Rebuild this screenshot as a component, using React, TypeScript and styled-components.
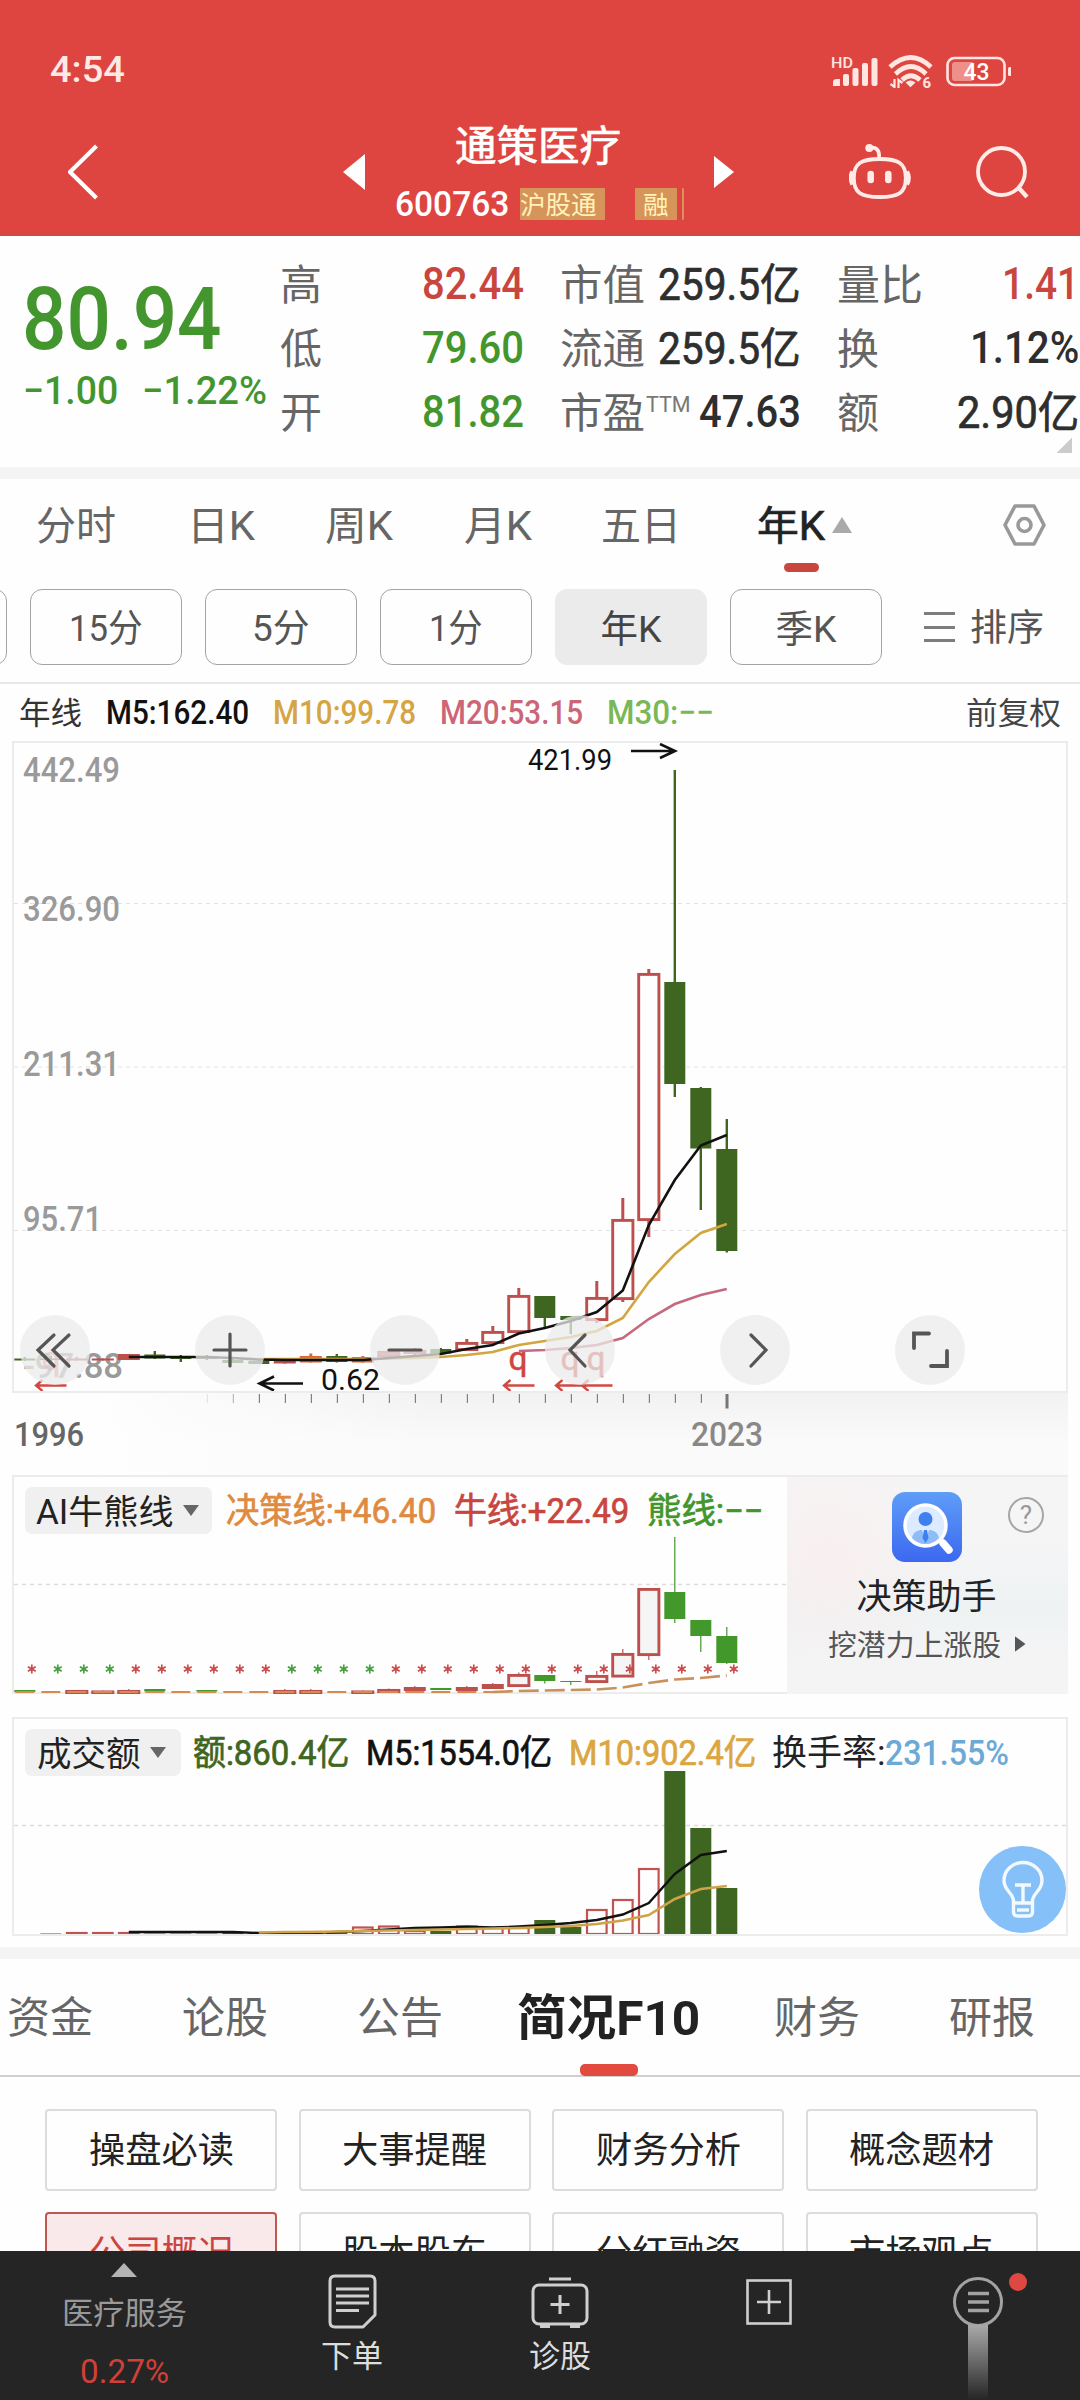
import React, { useLayoutEffect, useRef, useState } from "react";
import styled, { createGlobalStyle } from "styled-components";

const FONT = '"Roboto", "Noto Sans CJK SC", sans-serif';

const Global = createGlobalStyle`
  * { box-sizing: border-box; }
  html, body { margin: 0; padding: 0; background: #fefefe; }
  body { font-family: ${FONT}; }
  svg { display: block; flex: none; }
  svg text { font-family: ${FONT}; }
`;

/* ---------- text that is condensed to a given width ---------- */

const FitBox = styled.span<{ $w: number; $ml: number; $size: number; $color: string; $weight: number; $cjk: boolean; $mixed: boolean }>`
  display: block;
  flex: none;
  width: ${(p) => p.$w}px;
  margin-left: ${(p) => p.$ml}px;
  font-size: ${(p) => p.$size}px;
  line-height: 1.2;
  font-weight: ${(p) => (p.$weight === 500 && (p.$cjk || p.$mixed) ? 400 : p.$weight)};
  -webkit-text-stroke: ${(p) => (p.$weight === 500 && (p.$cjk || p.$mixed) ? "0.7px" : "0")};
  color: ${(p) => p.$color};
  white-space: nowrap;
  transform: translateY(${(p) => (p.$cjk ? 0.055 : p.$mixed ? 0.035 : 0.02)}em);
`;
const FitInner = styled.span`
  display: inline-block;
  transform-origin: 0 50%;
`;

type FitProps = { w: number; size: number; color?: string; ml?: number; weight?: number; children: string };

function Fit({ w, size, color = "#333", ml = 0, weight = 400, children }: FitProps) {
  const ref = useRef<HTMLSpanElement>(null);
  const [k, setK] = useState(1);
  useLayoutEffect(() => {
    if (ref.current && ref.current.offsetWidth) setK(w / ref.current.offsetWidth);
  }, [w, size, children]);
  const hasCjk = /[\u4e00-\u9fff]/.test(children);
  const hasDigits = /[0-9:]/.test(children);
  return (
    <FitBox $w={w} $ml={ml} $size={size} $color={color} $weight={weight} $cjk={hasCjk && !hasDigits} $mixed={hasCjk && hasDigits}>
      <FitInner ref={ref} style={{ transform: `scaleX(${k})` }}>{children}</FitInner>
    </FitBox>
  );
}

/* ---------- shell ---------- */

const Page = styled.div`
  width: 1080px;
  height: 2400px;
  overflow: hidden;
  display: flex;
  flex-direction: column;
  background: #fefefe;
`;
const Band = styled.div<{ $h: number }>`
  flex: none;
  height: ${(p) => p.$h}px;
  background: #f4f4f4;
`;

/* ---------- header ---------- */

const Header = styled.header`
  flex: none;
  height: 236px;
  background: #de4540;
  border-bottom: 2px solid #d14a44;
`;
const StatusBar = styled.div`
  height: 110px;
  padding: 30px 69px 0 50px;
  display: flex;
  align-items: center;
  justify-content: space-between;
`;
const TitleBar = styled.div`
  height: 124px;
  display: flex;
  align-items: center;
  padding-left: 68px;
`;
const Slot = styled.div<{ $ml: number }>`
  flex: none;
  margin-left: ${(p) => p.$ml}px;
`;
const TitleStack = styled.div`
  flex: none;
  width: 288px;
  height: 124px;
  margin-left: 31px;
  padding-top: 11px;
`;
const TitleLine = styled.div`
  height: 48px;
  display: flex;
  align-items: center;
`;
const CodeLine = styled.div`
  height: 34px;
  margin-top: 18px;
  display: flex;
  align-items: center;
`;
const Badge = styled.div<{ $w: number; $ml: number; $pad: number }>`
  flex: none;
  width: ${(p) => p.$w}px;
  margin-left: ${(p) => p.$ml}px;
  height: 32px;
  padding-left: ${(p) => p.$pad}px;
  display: flex;
  align-items: center;
  background: #d6935a;
  border-radius: 1px;
`;

function StatusIcons() {
  return (
    <svg width="182" height="36" viewBox="829 50 182 36" fill="none">
      <text x="831" y="66" fontSize="14.5" fontWeight="500" fill="#ffe6e1" textLength="22" lengthAdjust="spacingAndGlyphs">HD</text>
      <g fill="#ffe6e1">
        <path d="M833 84v-4q0-3 4-3h3v7z" />
        <rect x="843" y="72" width="6" height="12" rx="2" />
        <rect x="852.500" y="66" width="6" height="18" rx="2" />
        <rect x="862" y="61" width="6" height="23" rx="2" />
        <rect x="871.500" y="56" width="6" height="28" rx="2" />
      </g>
      <g stroke="#ffe6e1" strokeWidth="4.600" strokeLinecap="butt">
        <path d="M890 65Q911 46 931 65" />
        <path d="M895.500 72Q911 57 926 72" />
        <path d="M902 78Q911 69.500 920 78" />
      </g>
      <path d="M905.500 80.500q5-4 10 0l-5 4.800z" fill="#ffe6e1" />
      <path d="M894.500 77v8l-4-3M898.500 86v-8l4 3" stroke="#ffe6e1" strokeWidth="2.200" />
      <text x="922.500" y="85.500" fontSize="15" fontWeight="700" fill="#ffe6e1">6</text>
      <rect x="947.500" y="56" width="57" height="27" rx="7" stroke="#ffe6e1" strokeWidth="2.600" />
      <rect x="952" y="60" width="22" height="19" rx="3" fill="#ef8f8a" />
      <rect x="1008" y="65" width="3.500" height="9" rx="1.500" fill="#ffe6e1" />
      <text x="963.500" y="78" fontSize="23" fontWeight="500" fill="#fff" textLength="26" lengthAdjust="spacingAndGlyphs">43</text>
    </svg>
  );
}

/* ---------- quote ---------- */

const Quote = styled.section`
  flex: none;
  position: relative;
  height: 231px;
  display: flex;
`;
const PriceCol = styled.div`
  flex: none;
  width: 280px;
  padding: 28px 0 0 22px;
`;
const PriceLine = styled.div`
  height: 106px;
  display: flex;
  align-items: center;
`;
const ChangeLine = styled.div`
  height: 40px;
  display: flex;
  align-items: center;
`;
const QuoteGrid = styled.div`
  display: grid;
  grid-template-columns: 244px 241px 242px;
  grid-auto-rows: 64px;
  column-gap: 36px;
  padding-top: 16px;
`;
const QuoteCell = styled.div`
  display: flex;
  align-items: center;
  justify-content: space-between;
`;
const LabelWrap = styled.div`
  display: flex;
  align-items: center;
`;
const Super = styled.div`
  padding-bottom: 14px;
`;
const Corner = styled.div`
  position: absolute;
  right: 8px;
  bottom: 14px;
  width: 15px;
  height: 16px;
  background: linear-gradient(135deg, transparent 50%, #ccc 50%);
`;

const RED = "#c9463f";
const GREEN = "#43962d";
const QUOTES = [
  { l: "高", lw: 42, v: "82.44", vw: 102, c: RED },
  { l: "市值", lw: 85, v: "259.5亿", vw: 143, c: "#2e2e2e" },
  { l: "量比", lw: 86, v: "1.41", vw: 77, c: RED },
  { l: "低", lw: 42, v: "79.60", vw: 102, c: GREEN },
  { l: "流通", lw: 85, v: "259.5亿", vw: 143, c: "#2e2e2e" },
  { l: "换", lw: 42, v: "1.12%", vw: 109, c: "#2e2e2e" },
  { l: "开", lw: 42, v: "81.82", vw: 102, c: GREEN },
  { l: "市盈", lw: 85, v: "47.63", vw: 102, c: "#2e2e2e", sup: "TTM" },
  { l: "额", lw: 42, v: "2.90亿", vw: 122, c: "#2e2e2e" },
];

/* ---------- period tabs ---------- */

const PeriodTabs = styled.nav`
  flex: none;
  position: relative;
  height: 92px;
  display: flex;
  align-items: center;
`;
const ActiveBar = styled.div<{ $x: number; $y: number; $w: number; $h: number; $c: string }>`
  position: absolute;
  left: ${(p) => p.$x}px;
  top: ${(p) => p.$y}px;
  width: ${(p) => p.$w}px;
  height: ${(p) => p.$h}px;
  border-radius: 5px;
  background: ${(p) => p.$c};
`;
const Tri = styled.div<{ $ml: number; $w: number; $h: number; $c: string; $dir: "up" | "down" | "right" }>`
  flex: none;
  margin-left: ${(p) => p.$ml}px;
  width: ${(p) => p.$w}px;
  height: ${(p) => p.$h}px;
  background: ${(p) => p.$c};
  clip-path: ${(p) =>
    p.$dir === "up"
      ? "polygon(50% 0, 100% 100%, 0 100%)"
      : p.$dir === "down"
      ? "polygon(0 0, 100% 0, 50% 100%)"
      : "polygon(0 0, 100% 50%, 0 100%)"};
`;
const PillRow = styled.div`
  flex: none;
  height: 113px;
  padding-top: 18px;
  display: flex;
  border-bottom: 2px solid #e8e8e8;
`;
const Pill = styled.div<{ $on?: boolean }>`
  flex: none;
  width: 152px;
  height: 76px;
  margin-right: 23px;
  border: 1.5px solid ${(p) => (p.$on ? "#ebebeb" : "#a3a3a3")};
  background: ${(p) => (p.$on ? "#ebebeb" : "transparent")};
  border-radius: 12px;
  display: flex;
  align-items: center;
  justify-content: center;
`;
const PillEdge = styled(Pill)`
  margin-left: -145px;
`;
const SortBox = styled.div`
  height: 76px;
  margin-left: 19px;
  display: flex;
  align-items: center;
`;
const Burger = styled.div`
  width: 31px;
  height: 30px;
  display: flex;
  flex-direction: column;
  justify-content: space-between;
`;
const BurgerLine = styled.div`
  height: 3px;
  background: #7d7d7d;
`;
const Legend = styled.div`
  flex: none;
  height: 57px;
  display: flex;
  align-items: center;
  padding-bottom: 2px;
`;

/* ---------- charts ---------- */

const MainPanel = styled.section`
  flex: none;
  position: relative;
  width: 1056px;
  height: 652px;
  margin-left: 12px;
  border: 2px solid #ececec;
`;
const Controls = styled.div`
  position: absolute;
  left: 6px;
  top: 572px;
  display: flex;
  gap: 105px;
`;
const RoundBtn = styled.div`
  width: 70px;
  height: 70px;
  border-radius: 50%;
  background: rgba(235, 235, 235, 0.75);
  display: flex;
  align-items: center;
  justify-content: center;
`;
const AxisBand = styled.div`
  flex: none;
  position: relative;
  width: 1056px;
  height: 82px;
  margin-left: 12px;
  background: linear-gradient(90deg, #fefefe 8%, rgba(254, 254, 254, 0) 40%), linear-gradient(180deg, #f2f2f2, #fafafa 60%);
`;
const YearRow = styled.div`
  display: flex;
  padding: 1px 0 0 2px;
`;

const cx = (i: number) => 24.8 + 26 * i;
type Candle = [number, "r" | "g" | "R" | "o", number, number, number, number];

/* index, kind (r hollow, R filled, o orange, g green), body top/bottom, wick top/bottom */
const MAIN: Candle[] = [
  [0, "g", 1358.5, 1360.5, 1357, 1361],
  [1, "g", 1358.5, 1360, 1356, 1361],
  [2, "R", 1358.5, 1360.5, 1357, 1361],
  [3, "R", 1358.5, 1360.5, 1358, 1361],
  [4, "R", 1354, 1360, 1354, 1360],
  [5, "g", 1354.5, 1358.5, 1351, 1359],
  [6, "g", 1356, 1359, 1355, 1362],
  [7, "g", 1357, 1359, 1355, 1360],
  [8, "g", 1360, 1363, 1358, 1363],
  [9, "g", 1361, 1364, 1359, 1364],
  [10, "R", 1361, 1363.5, 1359, 1364],
  [11, "o", 1356, 1362.5, 1353.5, 1363],
  [12, "g", 1356, 1362, 1354, 1362.5],
  [13, "o", 1357, 1362.5, 1356, 1363],
  [14, "r", 1351, 1357, 1350, 1357],
  [15, "r", 1350, 1354, 1348, 1355],
  [16, "g", 1349, 1353.5, 1348, 1354],
  [17, "r", 1342, 1351, 1339, 1351],
  [18, "r", 1331, 1344, 1326, 1344],
  [19, "r", 1295, 1333, 1288, 1333],
  [20, "g", 1296, 1318, 1296, 1328],
  [21, "g", 1316, 1320, 1316, 1334],
  [22, "r", 1297, 1321, 1281, 1323],
  [23, "r", 1219, 1300, 1198, 1302],
  [24, "r", 973, 1221, 969, 1237],
  [25, "g", 982, 1084, 770, 1097],
  [26, "g", 1088, 1148.5, 1087, 1210],
  [27, "g", 1149, 1251, 1119, 1252.5],
];
const AI: Candle[] = [
  [0, "g", 1690, 1692, 1690, 1692],
  [2, "r", 1690, 1694, 1690, 1694],
  [3, "r", 1690.5, 1694, 1690, 1694],
  [4, "r", 1690, 1694, 1689, 1694],
  [5, "g", 1689, 1691.5, 1689, 1692],
  [7, "g", 1690, 1691.5, 1690, 1692],
  [10, "r", 1690, 1694, 1689, 1694],
  [11, "r", 1690, 1694, 1689, 1694],
  [13, "r", 1690.5, 1694, 1690, 1694],
  [14, "r", 1689, 1693, 1688.5, 1693],
  [15, "R", 1687, 1691, 1686, 1691],
  [16, "g", 1688, 1690, 1688, 1690],
  [17, "R", 1687, 1691, 1686, 1691],
  [18, "R", 1684, 1689, 1683, 1689],
  [19, "r", 1674, 1687, 1672.500, 1687],
  [20, "g", 1675, 1681, 1675, 1683.5],
  [21, "g", 1681, 1682, 1681, 1685],
  [22, "r", 1675, 1683, 1671, 1683],
  [23, "r", 1653, 1677.5, 1649, 1677.5],
  [24, "r", 1588, 1656, 1588, 1660],
  [25, "g", 1592, 1619, 1537, 1623],
  [26, "g", 1620, 1636, 1620, 1652],
  [27, "g", 1636, 1663, 1627, 1664],
];
const VOL: [number, "r" | "g", number][] = [
  [0, "g", 1934], [1, "g", 1933.5], [2, "r", 1932], [3, "r", 1932], [4, "r", 1932], [5, "g", 1933.5], [6, "g", 1933.5],
  [7, "g", 1933.5], [8, "g", 1933], [9, "g", 1933], [10, "r", 1932.5], [11, "r", 1931], [12, "g", 1931.5], [13, "r", 1926.5],
  [14, "r", 1925.5], [15, "r", 1930], [16, "g", 1931], [17, "r", 1925.5], [18, "r", 1927], [19, "r", 1927], [20, "g", 1920],
  [21, "g", 1927], [22, "r", 1909], [23, "r", 1899], [24, "r", 1868], [25, "g", 1771], [26, "g", 1828], [27, "g", 1888],
];

const line = (start: number, ys: number[]) => ys.map((y, k) => `${cx(start + k)},${y}`).join(" ");

const MA5 = line(4, [1357, 1357, 1357, 1357, 1358, 1359.500, 1360, 1360, 1360, 1360, 1358, 1356, 1354, 1349, 1345, 1333.500, 1328, 1321, 1312, 1290.500, 1225, 1180, 1145.500, 1135]);
const MA10 = line(9, [1359, 1359, 1359, 1359, 1359, 1358.500, 1358, 1357, 1355, 1352, 1345, 1341, 1337, 1331, 1318, 1282, 1254, 1233, 1224]);
const MA20 = line(19, [1351, 1350, 1348, 1345, 1338, 1319, 1304, 1295, 1289]);
const VM5 = line(4, [1932, 1932, 1932, 1932, 1932, 1933, 1933, 1933, 1932, 1931, 1929.500, 1928, 1927.500, 1926.800, 1927.500, 1926.500, 1925, 1923, 1920, 1914.500, 1903, 1874, 1855, 1851]);
const VM10 = line(9, [1932.500, 1932, 1932, 1931.500, 1931, 1930.500, 1930, 1929.500, 1929, 1928.500, 1928, 1927, 1926, 1924, 1920.500, 1915, 1899, 1889, 1886]);

const DEEP = "#3f6621";

function Candles({ data, green, hollow }: { data: Candle[]; green: string; hollow: string }) {
  const thin = green !== DEEP;
  return (
    <g>
      {data.map(([i, kind, t, b, wt, wb]) => {
        const x = cx(i);
        if (kind === "g")
          return (
            <g key={i} fill={green}>
              <rect x={x - (thin ? 0.6 : 1.2)} y={wt} width={thin ? 1.2 : 2.4} height={wb - wt} />
              <rect x={x - 10.5} y={t} width={21} height={b - t} />
            </g>
          );
        const col = kind === "o" ? "#dd6436" : "#bd504c";
        return (
          <g key={i}>
            <rect x={x - (thin ? 0.6 : 1.5)} y={wt} width={thin ? 1.2 : 3} height={Math.max(0, t - wt)} fill={col} />
            <rect x={x - (thin ? 0.6 : 1.5)} y={b} width={thin ? 1.2 : 3} height={Math.max(0, wb - b)} fill={col} />
            {kind === "r" ? (
              <rect x={x - 10.1} y={t + 1.4} width={20.2} height={Math.max(0.5, b - t - 2.8)} fill={hollow} stroke={col} strokeWidth={2.9} />
            ) : (
              <rect x={x - 11} y={t} width={22} height={b - t} fill={col} />
            )}
          </g>
        );
      })}
    </g>
  );
}

const Q = ({ x, o = 1 }: { x: number; o?: number }) => (
  <text x={x - 10.5} y={1369.5} fontSize="34" fill="#d0453f" stroke="#d0453f" strokeWidth="0.5" opacity={o} textLength="19" lengthAdjust="spacingAndGlyphs">q</text>
);
const RedArrow = ({ x }: { x: number }) => (
  <path d={`M${x + 31} 1385.500H${x}M${x + 7} 1380L${x + 0.5} 1385.500L${x + 7} 1391`} stroke="#cf4a44" strokeWidth="2.400" fill="none" />
);
const AxisLabel = ({ y, w, children }: { y: number; w: number; children: string }) => (
  <text x="23" y={y} fontSize="35" fontWeight="500" fill="#9a9a9a" textLength={w} lengthAdjust="spacingAndGlyphs">{children}</text>
);

function MainChart() {
  return (
    <svg width="1052" height="648" viewBox="14 743 1052 648" fill="none">
      {[903.5, 1067, 1230.5].map((y) => (
        <path key={y} d={`M14 ${y}H1066`} stroke="#e2e2e2" strokeWidth="1.200" strokeDasharray="4 4" />
      ))}
      <AxisLabel y={782} w={97}>442.49</AxisLabel>
      <AxisLabel y={921} w={97}>326.90</AxisLabel>
      <AxisLabel y={1076} w={97}>211.31</AxisLabel>
      <AxisLabel y={1231} w={79}>95.71</AxisLabel>
      <AxisLabel y={1378} w={100}>-97.88</AxisLabel>
      <Candles data={MAIN} green={DEEP} hollow="#fefefe" />
      <polyline points={MA20} stroke="#c56a7e" strokeWidth="2.600" />
      <polyline points={MA10} stroke="#d3a53f" strokeWidth="2.600" />
      <polyline points={MA5} stroke="#111" strokeWidth="2.600" />
      <Q x={52} o={0.6} />
      <Q x={519} />
      <Q x={571} />
      <Q x={597} />
      <RedArrow x={35.5} />
      <RedArrow x={503.500} />
      <RedArrow x={555.500} />
      <RedArrow x={581.500} />
      <text x="528" y="770" fontSize="30" fill="#111" textLength="84" lengthAdjust="spacingAndGlyphs">421.99</text>
      <path d="M631 751H674M660 744L675 751L660 758" stroke="#111" strokeWidth="2.600" />
      <text x="321" y="1390" fontSize="30" fill="#111" textLength="59" lengthAdjust="spacingAndGlyphs">0.62</text>
      <path d="M303 1383.500H260M274 1376.500L259.500 1383.500L274 1390.500" stroke="#111" strokeWidth="2.600" />
    </svg>
  );
}

const CTRL = [
  "M34 20L18 35L34 51M49 20L33 35L49 51",
  "M19 35H51M35 19V51",
  "M19 35H51",
  "M40 20L25 35L40 51",
  "M31 20L46 35L31 51",
  "M34 18.500H19V33M52 36V51H36",
];

const SubPanel = styled.section`
  flex: none;
  position: relative;
  width: 1056px;
  height: 219px;
  margin-left: 12px;
  border: 2px solid #ececec;
`;
const SubLegend = styled.div`
  position: absolute;
  left: 11px;
  top: 10px;
  height: 47px;
  display: flex;
  align-items: center;
`;
const Picker = styled.div<{ $w: number }>`
  flex: none;
  width: ${(p) => p.$w}px;
  height: 47px;
  border-radius: 7px;
  background: #f0f0f0;
  display: flex;
  align-items: center;
`;
const Helper = styled.div`
  position: absolute;
  right: -2px;
  top: 0;
  width: 281px;
  height: 217px;
  padding: 15px 2px 0 0;
  display: flex;
  flex-direction: column;
  align-items: center;
  background: radial-gradient(circle at 15% 38%, #f8efef, transparent 45%), linear-gradient(180deg, #f5f5f6 30%, #eef2f3 60%, #f4f4f5 85%);
`;
const HelpMark = styled.div`
  position: absolute;
  right: 24px;
  top: 20px;
  width: 36px;
  height: 36px;
  border: 2.5px solid #a6a6a6;
  border-radius: 50%;
  display: flex;
  align-items: center;
  justify-content: center;
  font-size: 26px;
  line-height: 1;
  color: #999;
`;
const HelperTitle = styled.div`
  margin-top: 12px;
  height: 44px;
  display: flex;
  align-items: center;
`;
const HelperSub = styled.div`
  margin-top: 6px;
  height: 40px;
  display: flex;
  align-items: center;
`;
const Gap = styled.div<{ $h: number }>`
  flex: none;
  height: ${(p) => p.$h}px;
`;
const BulbBtn = styled.div`
  position: absolute;
  right: 0;
  top: 127px;
  width: 87px;
  height: 87px;
  border-radius: 50%;
  background: #86c0f8;
  display: flex;
  align-items: center;
  justify-content: center;
`;

/* ---------- info tabs, grid and bottom bar ---------- */

const InfoTabs = styled.nav`
  flex: none;
  position: relative;
  height: 118px;
  display: flex;
  align-items: center;
  border-bottom: 2px solid #cfcfcf;
`;
const InfoGrid = styled.section`
  flex: none;
  height: 174px;
  overflow: hidden;
  padding: 32px 42px 0 45px;
  display: grid;
  grid-template-columns: repeat(4, 1fr);
  grid-auto-rows: 82px;
  column-gap: 21.5px;
  row-gap: 21px;
`;
const InfoCell = styled.div<{ $on?: boolean }>`
  border: 2px solid ${(p) => (p.$on ? "#bf5650" : "#dcdcdc")};
  background: ${(p) => (p.$on ? "#fae9ea" : "#fefefe")};
  border-radius: 4px;
  display: flex;
  align-items: center;
  justify-content: center;
  padding-bottom: 2px;
`;
const BottomBar = styled.footer`
  flex: none;
  height: 149px;
  background: #252525;
  display: flex;
`;
const NavItem = styled.div<{ $ml: number; $w: number; $pt: number }>`
  flex: none;
  position: relative;
  margin-left: ${(p) => p.$ml}px;
  width: ${(p) => p.$w}px;
  padding-top: ${(p) => p.$pt}px;
  display: flex;
  flex-direction: column;
  align-items: center;
`;
const NavText = styled.div<{ $mt: number }>`
  margin-top: ${(p) => p.$mt}px;
`;
const Handle = styled.div`
  width: 20px;
  height: 78px;
  margin-top: -3px;
  background: linear-gradient(180deg, #a9a9a9 0%, #7b7b7b 35%, #252525 100%);
`;
const RedDot = styled.div`
  position: absolute;
  left: 71px;
  top: 22px;
  width: 18px;
  height: 18px;
  border-radius: 50%;
  background: #df4840;
`;

const GRID = ["操盘必读", "大事提醒", "财务分析", "概念题材", "公司概况", "股本股东", "分红融资", "市场观点"];

export default function App() {
  return (
    <Page>
      <Global />
      <Header>
        <StatusBar>
          <Fit w={75} size={36} color="#ffe9e6" weight={500}>4:54</Fit>
          <StatusIcons />
        </StatusBar>
        <TitleBar>
          <svg width="30" height="56" viewBox="0 0 30 56" fill="none">
            <path d="M28.500 2L2 28L28.500 54" stroke="#fff" strokeWidth="4.200" />
          </svg>
          <Slot $ml={245}>
            <svg width="22" height="36"><path d="M22 0V36L0 18z" fill="#fff" /></svg>
          </Slot>
          <TitleStack>
            <TitleLine><Fit ml={59} w={166} size={41.5} color="#fff" weight={500}>通策医疗</Fit></TitleLine>
            <CodeLine>
              <Fit ml={-1} w={114} size={35} color="#fff" weight={500}>600763</Fit>
              <Badge $w={85} $ml={11} $pad={0}><Fit w={77} size={25.5} color="#fff3b8">沪股通</Fit></Badge>
              <Badge $w={42} $ml={30} $pad={8}><Fit w={26} size={25.500} color="#fff3b8">融</Fit></Badge>
              <Badge $w={2} $ml={5} $pad={0} />
            </CodeLine>
          </TitleStack>
          <Slot $ml={30}>
            <svg width="20" height="32"><path d="M0 0V32L20 16z" fill="#fff" /></svg>
          </Slot>
          <Slot $ml={115}>
            <svg width="62" height="58" viewBox="849 143.500 62 58" fill="none" stroke="#ffece8" strokeWidth="3.800">
              <path d="M853.800 178.500C853.800 164 861 159.500 879.800 159.500S905.800 164 905.800 178.500S899 197.500 879.800 197.500S853.800 193 853.800 178.500z" />
              <path d="M852.500 172q-3.500 6 0 13M907 172q3.500 6 0 13" strokeWidth="4.200" />
              <path d="M869 148.500C876 147 880 150 879 159" strokeLinecap="round" />
              <circle cx="869.300" cy="148.500" r="4" fill="#ffece8" stroke="none" />
              <path d="M870.700 174.500v6M888.300 174.500v6" strokeWidth="6.500" strokeLinecap="round" />
            </svg>
          </Slot>
          <Slot $ml={65}>
            <svg width="53" height="54" viewBox="976 145 53 54" fill="none" stroke="#ffece8" strokeWidth="3.800">
              <circle cx="1001.500" cy="171.500" r="23.500" />
              <path d="M1018 187L1027 197" strokeWidth="4.200" />
            </svg>
          </Slot>
        </TitleBar>
      </Header>

      <Quote>
        <PriceCol>
          <PriceLine><Fit w={200} size={88} color={GREEN} weight={500}>80.94</Fit></PriceLine>
          <ChangeLine>
            <Fit ml={1} w={95} size={39} color={GREEN} weight={500}>−1.00</Fit>
            <Fit w={125} ml={24} size={39} color={GREEN} weight={500}>−1.22%</Fit>
          </ChangeLine>
        </PriceCol>
        <QuoteGrid>
          {QUOTES.map((q) => (
            <QuoteCell key={q.l}>
              <LabelWrap>
                <Fit w={q.lw} size={42} color="#666">{q.l}</Fit>
                {q.sup && <Super><Fit w={45} ml={1} size={22} color="#777">{q.sup}</Fit></Super>}
              </LabelWrap>
              <Fit w={q.vw} size={43.5} color={q.c} weight={500}>{q.v}</Fit>
            </QuoteCell>
          ))}
        </QuoteGrid>
        <Corner />
      </Quote>
      <Band $h={12} />

      <PeriodTabs>
        <Fit ml={36} w={80} size={40} color="#666">分时</Fit>
        <Fit ml={71} w={68} size={40} color="#666">日K</Fit>
        <Fit ml={70} w={68} size={40} color="#666">周K</Fit>
        <Fit ml={71} w={68} size={40} color="#666">月K</Fit>
        <Fit ml={69} w={80} size={40} color="#666">五日</Fit>
        <Fit ml={76} w={68} size={40} color="#222" weight={500}>年K</Fit>
        <Tri $ml={7} $w={20} $h={16} $c="#aaa" $dir="up" />
        <Slot $ml={151}>
          <svg width="43" height="42" viewBox="0 0 43 42" fill="none" stroke="#999" strokeWidth="3.600" strokeLinejoin="round">
            <path d="M12 2H31L41 21L31 40H12L2 21z" />
            <circle cx="21.500" cy="21" r="6.500" />
          </svg>
        </Slot>
        <ActiveBar $x={784} $y={84} $w={35} $h={9} $c={RED} />
      </PeriodTabs>
      <PillRow>
        <PillEdge />
        <Pill><Fit w={74} size={37.500} color="#555">15分</Fit></Pill>
        <Pill><Fit w={58} size={37.500} color="#555">5分</Fit></Pill>
        <Pill><Fit w={54} size={37.500} color="#555">1分</Fit></Pill>
        <Pill $on><Fit w={61} size={37.500} color="#444">年K</Fit></Pill>
        <Pill><Fit w={61} size={37.500} color="#555">季K</Fit></Pill>
        <SortBox>
          <Burger><BurgerLine /><BurgerLine /><BurgerLine /></Burger>
          <Fit ml={15} w={74} size={37} color="#555">排序</Fit>
        </SortBox>
      </PillRow>
      <Legend>
        <Fit ml={19} w={63} size={31} color="#333">年线</Fit>
        <Fit ml={24} w={143} size={34} color="#111" weight={500}>M5:162.40</Fit>
        <Fit ml={24} w={143} size={34} color="#d5a543" weight={500}>M10:99.78</Fit>
        <Fit ml={24} w={143} size={34} color="#cc6577" weight={500}>M20:53.15</Fit>
        <Fit ml={24} w={107} size={34} color="#79b757" weight={500}>M30:−−</Fit>
        <Fit ml={252} w={95} size={31} color="#444">前复权</Fit>
      </Legend>

      <MainPanel>
        <MainChart />
        <Controls>
          {CTRL.map((d, i) => (
            <RoundBtn key={d}>
              <svg width="70" height="70" viewBox="0 0 70 70" fill="none">
                <path d={d} stroke="#555" strokeWidth={i === 5 ? 3.8 : 3.2} strokeLinecap="round" />
              </svg>
            </RoundBtn>
          ))}
        </Controls>
      </MainPanel>
      <AxisBand>
        <svg width="1056" height="20" viewBox="12 1393 1056 20">
          {Array.from({ length: 20 }, (_, k) => k + 7).map((i) => (
            <rect key={i} x={cx(i)} y="1394" width="1.200" height="9" fill={i === 7 ? "#e4e4e4" : i === 8 ? "#bbb" : "#808080"} />
          ))}
          <rect x="725.500" y="1394" width="3" height="14.500" fill="#777" />
        </svg>
        <YearRow>
          <Fit w={70} size={33.500} color="#666" weight={500}>1996</Fit>
          <Fit ml={607} w={72} size={33.500} color="#888" weight={500}>2023</Fit>
        </YearRow>
      </AxisBand>

      <SubPanel>
        <svg width="1052" height="217" viewBox="14 1477 1052 217" fill="none">
          <path d="M14 1584.500H788" stroke="#ddd" strokeWidth="1.400" strokeDasharray="4 4" />
          <Candles data={AI} green="#43982b" hollow="#f5f5f6" />
          <g fill="#d98a4f">
            {Array.from({ length: 19 }, (_, i) => (
              <rect key={i} x={cx(i) - 9.5} y="1691" width="19" height="2" />
            ))}
          </g>
          <polyline points={line(18, [1692, 1691, 1690.5, 1690, 1689.5, 1687.500, 1683, 1679.500, 1678, 1675.500])} stroke="#c9925c" strokeWidth="2.600" strokeDasharray="20 6" />
          {Array.from({ length: 28 }, (_, i) => {
            const green = (i > 0 && i < 4) || (i > 9 && i < 14);
            return (
              <path key={i} d="M0-4.500V4.500M-3.900-2.300L3.900 2.300M-3.900 2.300L3.900-2.300" transform={`translate(${cx(i) + 7} 1669)`} stroke={green ? "#43a03c" : "#cc4a4a"} strokeWidth="1.700" />
            );
          })}
        </svg>
        <SubLegend>
          <Picker $w={187}>
            <Fit ml={11} w={137} size={34.500} color="#222">AI牛熊线</Fit>
            <Tri $ml={10} $w={16} $h={11} $c="#666" $dir="down" />
          </Picker>
          <Fit ml={14} w={210} size={35} color="#df8b3f" weight={500}>决策线:+46.40</Fit>
          <Fit ml={18} w={175} size={35} color={RED} weight={500}>牛线:+22.49</Fit>
          <Fit ml={18} w={117} size={35} color={GREEN} weight={500}>熊线:−−</Fit>
        </SubLegend>
        <Helper>
          <svg width="70" height="70" viewBox="0 0 70 70" fill="none">
            <defs>
              <linearGradient id="app" x1="0" y1="0" x2="0" y2="1">
                <stop offset="0" stopColor="#5f9df8" />
                <stop offset="1" stopColor="#3c68f0" />
              </linearGradient>
            </defs>
            <rect width="70" height="70" rx="13" fill="url(#app)" />
            <path d="M51 51L57 58" stroke="#fff" strokeWidth="7.500" strokeLinecap="round" />
            <circle cx="33.500" cy="33.500" r="20.500" fill="#dcebff" stroke="#fff" strokeWidth="3.500" />
            <circle cx="33.500" cy="27" r="7" fill="#3f7ff0" />
            <path d="M20 46C21 40 26 38 30 38L33.500 49L37 38C41 38 46 40 47 46Q41 52 33.500 52T20 46z" fill="#8dbcf8" />
            <path d="M32 38h3l1.500 8l-3 5l-3-5z" fill="#3f7ff0" />
          </svg>
          <HelpMark>?</HelpMark>
          <HelperTitle><Fit w={140} size={35} color="#222">决策助手</Fit></HelperTitle>
          <HelperSub>
            <Fit w={173} size={29} color="#555">挖潜力上涨股</Fit>
            <Tri $ml={14} $w={11} $h={16} $c="#555" $dir="right" />
          </HelperSub>
        </Helper>
      </SubPanel>
      <Gap $h={23} />
      <SubPanel>
        <svg width="1052" height="215" viewBox="14 1719 1052 215" fill="none">
          <path d="M14 1825.500H1066" stroke="#ddd" strokeWidth="1.400" strokeDasharray="4 4" />
          {VOL.map(([i, kind, t]) =>
            kind === "g" ? (
              <rect key={i} x={cx(i) - 10.5} y={t} width="21" height={1935 - t} fill={DEEP} />
            ) : (
              <rect key={i} x={cx(i) - 9.8} y={t + 1} width="19.600" height={1934 - t - 1} fill="#fefefe" stroke="#c25350" strokeWidth="2.200" />
            )
          )}
          <polyline points={VM5} stroke="#111" strokeWidth="2.400" />
          <polyline points={VM10} stroke="#cfa348" strokeWidth="2.600" />
        </svg>
        <SubLegend>
          <Picker $w={156}>
            <Fit ml={12} w={104} size={34.500} color="#222">成交额</Fit>
            <Tri $ml={9} $w={16} $h={11} $c="#666" $dir="down" />
          </Picker>
          <Fit ml={12} w={156} size={35} color={DEEP} weight={500}>额:860.4亿</Fit>
          <Fit ml={17} w={186} size={35} color="#111" weight={500}>M5:1554.0亿</Fit>
          <Fit ml={17} w={187} size={35} color="#dba63f" weight={500}>M10:902.4亿</Fit>
          <Fit ml={16} w={113} size={35} color="#222">换手率:</Fit>
          <Fit w={124} size={35} color="#6ba9d6" weight={500}>231.55%</Fit>
        </SubLegend>
        <BulbBtn>
          <svg width="44" height="60" viewBox="0 0 44 60" fill="none" stroke="#f2f9ff" strokeWidth="3.400" strokeLinejoin="round">
            <path d="M12.500 41C12.500 33 3 31 3 20.500A18.500 17.500 0 0 1 41 20.500C41 31 31.500 33 31.500 41V52Q31.500 56 27.500 56H16.500Q12.500 56 12.500 52z" />
            <path d="M14 25H30M22 25V43M12.500 43H31.500" />
            <path d="M16 50H28" />
          </svg>
        </BulbBtn>
      </SubPanel>
      <Gap $h={11} />
      <Band $h={12} />

      <InfoTabs>
        <Fit ml={7} w={86} size={43} color="#666">资金</Fit>
        <Fit ml={89} w={86} size={43} color="#666">论股</Fit>
        <Fit ml={89} w={86} size={43} color="#666">公告</Fit>
        <Fit ml={74} w={183} size={48.5} color="#222" weight={700}>简况F10</Fit>
        <Fit ml={74} w={86} size={43} color="#666">财务</Fit>
        <Fit ml={89} w={86} size={43} color="#666">研报</Fit>
        <ActiveBar $x={580} $y={105} $w={58} $h={12} $c="#e24a40" />
      </InfoTabs>
      <InfoGrid>
        {GRID.map((t, i) => (
          <InfoCell key={t} $on={i === 4}>
            <Fit w={145} size={36.5} color={i === 4 ? "#c8463f" : "#222"}>{t}</Fit>
          </InfoCell>
        ))}
      </InfoGrid>

      <BottomBar>
        <NavItem $ml={60} $w={128} $pt={12}>
          <Tri $ml={0} $w={26} $h={14} $c="#b5b5b5" $dir="up" />
          <NavText $mt={16}><Fit w={125} size={31} color="#999">医疗服务</Fit></NavText>
          <NavText $mt={20}><Fit w={89} size={34} color="#cf4038">0.27%</Fit></NavText>
        </NavItem>
        <NavItem $ml={123} $w={82} $pt={23}>
          <svg width="49" height="55" viewBox="0 0 49 55" fill="none" stroke="#cfcfcf" strokeWidth="3">
            <path d="M7 2H42Q47 2 47 7V41L35 53H7Q2 53 2 48V7Q2 2 7 2z" strokeLinejoin="round" />
            <path d="M8 15H41M8 22H41M8 29H41M8 36.500H31" />
          </svg>
          <NavText $mt={7}><Fit w={62} size={31} color="#ddd">下单</Fit></NavText>
        </NavItem>
        <NavItem $ml={126} $w={82} $pt={26}>
          <svg width="58" height="52" viewBox="0 0 58 52" fill="none" stroke="#cfcfcf" strokeWidth="3">
            <path d="M18 2H40" />
            <rect x="2" y="8" width="54" height="39" rx="6" />
            <path d="M29 18V37M19.500 27.500H38.500" />
            <path d="M9 49.500H19M39 49.500H49" />
          </svg>
          <NavText $mt={7}><Fit w={62} size={31} color="#ddd">诊股</Fit></NavText>
        </NavItem>
        <NavItem $ml={128} $w={80} $pt={28}>
          <svg width="46" height="46" viewBox="0 0 46 46" fill="none" stroke="#cfcfcf" strokeWidth="2.600">
            <rect x="1.500" y="1.500" width="43" height="43" />
            <path d="M23 11V35M11 23H35" />
          </svg>
        </NavItem>
        <NavItem $ml={129} $w={80} $pt={25}>
          <svg width="52" height="52" viewBox="0 0 52 52" fill="none" stroke="#a2a2a2" strokeWidth="3">
            <circle cx="26" cy="26" r="23.500" />
            <path d="M16 17.500H37M16 26H37M16 34.500H37" strokeWidth="3.600" />
          </svg>
          <Handle />
          <RedDot />
        </NavItem>
      </BottomBar>
    </Page>
  );
}
